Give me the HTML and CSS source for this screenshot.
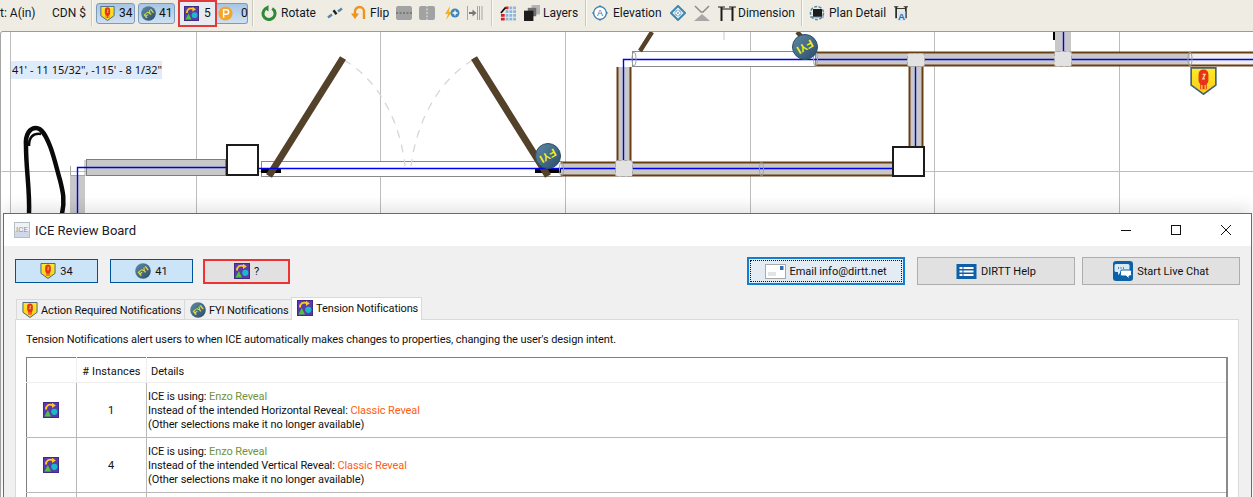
FILE: index.html
```html
<!DOCTYPE html>
<html lang="en">
<head>
<meta charset="utf-8">
<title>ICE Review Board</title>
<link rel="stylesheet" href="styles.css">
</head>
<body>
<svg class="defs" width="0" height="0" aria-hidden="true">
  <defs>
    <linearGradient id="pinfill" x1="0" y1="0" x2="1" y2="1">
      <stop offset="0" stop-color="#5f8aa8"/>
      <stop offset="1" stop-color="#2a4d68"/>
    </linearGradient>
    <linearGradient id="shieldfill" x1="0" y1="0" x2="0" y2="1">
      <stop offset="0" stop-color="#ffe92a"/>
      <stop offset="1" stop-color="#f8cf14"/>
    </linearGradient>
  </defs>
  <symbol id="shield" viewBox="0 0 16 17">
    <path d="M.5 .5h15v10.500L8 16.500.5 11z" fill="url(#shieldfill)" stroke="#44607c" stroke-width="1"/>
    <path d="M5 4.500c0-2 1.300-3 3-3s3 1 3 3v3.500c0 1-.5 1.800-1 2.300v3.200H6v-3.200c-.5-.5-1-1.300-1-2.300z" fill="#e5341a"/>
    <path d="M7 13.500V11M9 13.500V11" stroke="#ffe92a" stroke-width=".7"/>
    <path d="M7.500 4.500h1.400L7.600 7.200h1.300" fill="none" stroke="#ffd98a" stroke-width=".8"/>
  </symbol>
  <symbol id="coin" viewBox="0 0 16 16">
    <circle cx="8" cy="8" r="7.800" fill="url(#pinfill)"/>
  </symbol>
  <symbol id="tension" viewBox="0 0 16 16">
    <rect width="16" height="16" fill="#5a3ba8"/>
    <rect x=".5" y=".5" width="15" height="15" fill="none" stroke="#40298a"/>
    <path d="M3 7.500C3 3.500 6 1.800 9.500 3" fill="none" stroke="#ffc91f" stroke-width="1.900"/>
    <path d="M9 .8l3.800 2.700L9 6z" fill="#ffc91f"/>
    <path d="M1.500 14.500L4.800 8l3.200 6.500z" fill="#4ec43a"/>
    <circle cx="11.300" cy="9.800" r="3.100" fill="#19b9c9"/>
  </symbol>
  <symbol id="pcoin" viewBox="0 0 16 16">
    <circle cx="8" cy="8" r="7.500" fill="#f5a52a"/>
    <path d="M6 12.500V4h3a2.300 2.300 0 0 1 0 4.800H6" fill="none" stroke="#fff" stroke-width="1.500"/>
  </symbol>
  <symbol id="rotate" viewBox="0 0 16 16">
    <path d="M5.200 3.300a6 6 0 1 0 6 .2" fill="none" stroke="#2f8a38" stroke-width="3"/>
    <path d="M7.500 0v6.500L2.800 3.200z" fill="#2f8a38"/>
  </symbol>
  <symbol id="pivot" viewBox="0 0 16 16">
    <path d="M1 12.500l4-3M11 6.500l4-3" stroke="#5b86a8" stroke-width="2.500" fill="none"/>
    <path d="M5.500 6l2-1.500 3 4-2 1.500z" fill="#222"/>
  </symbol>
  <symbol id="flip" viewBox="0 0 16 16">
    <path d="M4 9V6.500a4.500 4.500 0 0 1 9 0V14" fill="none" stroke="#ef9418" stroke-width="2.400"/>
    <path d="M0 8.500h8L4 14z" fill="#ef9418"/>
  </symbol>
  <symbol id="splith" viewBox="0 0 16 16">
    <rect y="1" width="16" height="14" rx="2" fill="#a2a2a2"/>
    <path d="M0 8h16" stroke="#555" stroke-dasharray="2 1.500"/>
  </symbol>
  <symbol id="splitv" viewBox="0 0 16 16">
    <rect y="1" width="16" height="14" rx="2" fill="#a2a2a2"/>
    <path d="M8 0v16" stroke="#eee" stroke-dasharray="2 1.500"/>
  </symbol>
  <symbol id="bolt" viewBox="0 0 16 16">
    <path d="M6 1L1 9h3l-2 6 6-8H5z" fill="#f6b21c"/>
    <circle cx="11" cy="8" r="4.500" fill="#3f86b8"/>
    <path d="M8.500 8h5M11 5.500v5" stroke="#fff" stroke-width="1.300"/>
  </symbol>
  <symbol id="bars" viewBox="0 0 16 16">
    <path d="M.5 1v14M10.500 1v14M12.500 1v14M15 1v14" stroke="#a5a5a5" fill="none"/>
    <path d="M2 8h4" stroke="#777" stroke-width="2"/>
    <path d="M5.500 4.500L9.500 8l-4 3.500z" fill="#777"/>
  </symbol>
  <symbol id="table" viewBox="0 0 17 16">
    <path d="M10 1h3v3h-3zM14 1h3v3h-3zM6 5h3v3H6zM10 5h3v3h-3zM14 5h3v3h-3zM6 9h3v3H6zM10 9h3v3h-3zM14 9h3v3h-3zM6 13h3v3H6zM10 13h3v3h-3zM14 13h3v3h-3z" fill="#8db6dc"/>
    <path d="M6 1h3v3H6zM1 9h4v3H1zM1 13h4v3H1z" fill="#d3222a"/>
    <path d="M1 8l5-6" stroke="#111" stroke-width="1.800"/>
  </symbol>
  <symbol id="layers" viewBox="0 0 17 17">
    <rect x="8" width="9" height="10" fill="#b4b4b4"/>
    <rect x="4" y="3" width="9" height="9" fill="#6e6e6e"/>
    <rect y="6" width="10" height="11" fill="#1c1c1c"/>
  </symbol>
  <symbol id="elev" viewBox="0 0 16 16">
    <circle cx="8" cy="8" r="6.300" fill="#fff" stroke="#3f7fb0" stroke-width="1.200"/>
    <path d="M8 0l2 2H6zM8 16l2-2H6zM0 8l2-2v4zM16 8l-2-2v4z" fill="#3f7fb0"/>
  </symbol>
  <symbol id="diamond" viewBox="0 0 16 16">
    <path d="M8 1l7 7-7 7-7-7z" fill="#e8f1f8" stroke="#3f86b0" stroke-width="2"/>
    <circle cx="8" cy="8" r="3" fill="#fff" stroke="#7aa6c4" stroke-width=".8"/>
    <path d="M6 6l4 4M10 6l-4 4" stroke="#7aa6c4" stroke-width=".8"/>
  </symbol>
  <symbol id="hour" viewBox="0 0 16 16">
    <path d="M0 16l8-7 8 7z" fill="#a8a8a8"/>
    <path d="M1 1l6 6h2l6-6" fill="none" stroke="#8c8c8c" stroke-width="1.500"/>
  </symbol>
  <symbol id="dim" viewBox="0 0 18 18">
    <path d="M3.500 3v14M14.500 3v14" stroke="#1c1c1c" stroke-width="2"/>
    <path d="M0 3h7M11 3h7M3 5h12" stroke="#1c1c1c" stroke-width="1.200"/>
  </symbol>
  <symbol id="plan" viewBox="0 0 16 16">
    <circle cx="8" cy="8" r="6.500" fill="none" stroke="#5c86a6" stroke-width="1.500" stroke-dasharray="3 1.500"/>
    <rect x="4" y="4" width="9" height="8" fill="#1c1c1c"/>
    <path d="M1 12h14" stroke="#5c86a6"/>
  </symbol>
  <symbol id="dimA" viewBox="0 0 16 18">
    <path d="M2.500 2v13M13.500 2v13" stroke="#1c1c1c" stroke-width="1.800"/>
    <path d="M0 2h5M11 2h5M3 4h10" stroke="#1c1c1c"/>
    <rect x="4" y="7" width="9" height="11" fill="#d9e6f2"/>
  </symbol>
  <symbol id="envelope" viewBox="0 0 21 15">
    <rect x=".5" y=".5" width="20" height="14" fill="#fff" stroke="#a9a9a9"/>
    <rect x="15" y="2" width="3.500" height="4" fill="#2f6fb5"/>
    <path d="M3 9h8M3 11h8" stroke="#c8c8c8"/>
  </symbol>
  <symbol id="help" viewBox="0 0 20 15">
    <rect width="20" height="15" fill="#0f5fa8"/>
    <path d="M3 3h3v2H3zM7 3h10v2H7zM3 6.500h3v2H3zM7 6.500h10v2H7zM3 10h3v2H3zM7 10h10v2H7z" fill="#fff"/>
  </symbol>
  <symbol id="chat" viewBox="0 0 20 20">
    <rect width="20" height="20" rx="3" fill="#0b62a8"/>
    <path d="M3 3h12a1.500 1.500 0 0 1 1.500 1.500v5A1.500 1.500 0 0 1 15 11H8l-3 3v-3H3A1.500 1.500 0 0 1 1.500 9.500v-5A1.500 1.500 0 0 1 3 3z" fill="#dbe9f3"/>
    <path d="M9 9h8a1.500 1.500 0 0 1 1.500 1.500v3A1.500 1.500 0 0 1 17 15h-1v3l-3-3H9a1.500 1.500 0 0 1-1.500-1.500v-3A1.500 1.500 0 0 1 9 9z" fill="#fff" stroke="#0b62a8"/>
    <path d="M5 7h1M7.500 7h1M10 7h1" stroke="#2f6fa8" stroke-width="1.500"/>
  </symbol>
  <symbol id="ice" viewBox="0 0 16 16">
    <rect x=".5" y=".5" width="15" height="15" fill="#eef1f6" stroke="#b5bdc8"/>
    <rect x="1" y="9" width="14" height="6" fill="#cfd8e6"/>
  </symbol>
</svg>

<header class="toolbar">
  <span class="label w-unit">t: A(in)</span>
  <span class="label label-cdn">CDN $</span>
  <span class="sep sep-a"></span>
  <div class="chips">
    <span class="chip chip-shield"><svg class="ic ic-chip"><use href="#shield"/></svg>34</span>
    <span class="chip chip-fyi"><svg class="ic ic-chip" viewBox="0 0 16 16"><use href="#coin"/><text class="fyi-mark" x="8" y="10.500" transform="rotate(-38 8 8)">FYI</text></svg>41</span>
    <span class="chip chip-alert"><svg class="ic ic-chip"><use href="#tension"/></svg>5</span>
    <span class="chip chip-p"><svg class="ic ic-chip"><use href="#pcoin"/></svg>0</span>
  </div>
  <span class="sep sep-b"></span>
  <svg class="ic"><use href="#rotate"/></svg><span class="label lead w-rotate">Rotate</span>
  <svg class="ic m10"><use href="#pivot"/></svg>
  <svg class="ic m8"><use href="#flip"/></svg><span class="label lead3 w-flip">Flip</span>
  <svg class="ic m10"><use href="#splith"/></svg>
  <svg class="ic m7"><use href="#splitv"/></svg>
  <svg class="ic m9"><use href="#bolt"/></svg>
  <svg class="ic m7"><use href="#bars"/></svg>
  <span class="sep sep-c"></span>
  <svg class="ic"><use href="#table"/></svg>
  <svg class="ic m8"><use href="#layers"/></svg><span class="label lead3 w-layers">Layers</span>
  <span class="sep sep-d"></span>
  <svg class="ic" viewBox="0 0 16 16"><use href="#elev"/><text class="elev-mark" x="8" y="11">A</text></svg><span class="label lead5 w-elev">Elevation</span>
  <svg class="ic m8"><use href="#diamond"/></svg>
  <svg class="ic m8"><use href="#hour"/></svg>
  <svg class="ic ic-wide m8"><use href="#dim"/></svg><span class="label lead2 w-dim">Dimension</span>
  <span class="sep sep-e"></span>
  <svg class="ic"><use href="#plan"/></svg><span class="label lead w-plan">Plan Detail</span>
  <svg class="ic m7" viewBox="0 0 16 18"><use href="#dimA"/><text class="dima-mark" x="8.500" y="17">A</text></svg>
</header>

<main class="canvas">
  <svg class="plan" viewBox="0 32 1253 465" aria-hidden="true">
    <g class="grid">
      <path d="M10.500 32V497M196.500 32V497M380.500 32V497M565.500 32V497M750.500 32V497M934.500 32V497M1119.500 32V497M1.500 171.500H1253"/>
    </g>
    <!-- left freehand shape -->
    <path class="scribble" d="M29 214C30 190 26 170 26 146 25 134 30 128 36 128 42 128 46 136 50 146 54 156 57 170 60 180 63 192 65 200 62 214"/>
    <path class="scribble-in" d="M29 146C29 137 33 133 41 134"/>
    <!-- plain grey wall, left -->
    <rect class="core edge" x="86.500" y="159.500" width="139" height="16"/>
    <rect class="core" x="70" y="175" width="15" height="40"/>
    <path class="ghost" d="M70.500 166V175.500H85M85 160V176"/>
    <!-- door opening -->
    <rect class="open" x="261.500" y="161.500" width="300" height="15"/>
    <path class="black" d="M261 170.500H281M535 170.500H561"/>
    <path class="arc" d="M344 60C378 80 400 120 405 166M473 60C439 80 417 120 411 166"/>
    <path class="door" d="M343 58L269 176M474 58L548 176"/>
    <!-- brown walls -->
    <rect class="core" x="561" y="162" width="331" height="14"/>
    <rect class="core" x="617" y="67" width="14" height="94"/>
    <rect class="core" x="816" y="52" width="374" height="14"/>
    <rect class="core" x="909" y="66" width="14" height="80"/>
    <rect class="pale" x="1190" y="52" width="63" height="14"/>
    <path class="brown" d="M561 162.500H892M561 175.500H892M816 52.500H1253M816 65.500H1253M617.500 67V161M630.500 67V161M909.500 66V146M922.500 66V146"/>
    <rect class="core" x="1055" y="32" width="16" height="21"/>
    <rect class="black-tick" x="1053" y="32" width="2" height="8"/>
    <rect class="open" x="632.500" y="51.500" width="183" height="15"/>
    <path class="blue" d="M77.500 214V167.500H226M258 168.500H892M623.500 160V59.500H1253M915.500 66V146M1063.500 32V52"/>
    <g class="seam">
      <ellipse cx="561.500" cy="169" rx="2" ry="7"/>
      <ellipse cx="761.500" cy="169" rx="2" ry="7"/>
      <ellipse cx="815.500" cy="59" rx="2" ry="7"/>
      <ellipse cx="1190" cy="59" rx="2" ry="7"/>
      <ellipse cx="634" cy="59" rx="2" ry="7"/>
    </g>
    <g class="joint">
      <rect x="615.500" y="160.500" width="17" height="16" rx="2"/>
      <rect x="907.500" y="53.500" width="17" height="13" rx="2"/>
      <rect x="1054.500" y="51.500" width="17" height="15" rx="2"/>
    </g>
    <rect class="column" x="227" y="145" width="31" height="30"/>
    <rect class="column" x="893" y="147" width="31" height="29"/>
    <path class="door thin" d="M652 32L640 51M797 32L803 38"/>
    <path class="arc" d="M724 32V42"/>
    <!-- FYI pins -->
    <g class="pin" transform="translate(548 156)"><circle r="12.500"/><text transform="rotate(150)" y="4">FYI</text></g>
    <g class="pin" transform="translate(805 47)"><circle r="12.500"/><text transform="rotate(150)" y="4">FYI</text></g>
    <use href="#shield" x="1190" y="67" width="27" height="28"/>
  </svg>
  <div class="readout">41' - 11 15/32", -115' - 8 1/32"</div>
</main>

<section class="dialog">
  <div class="titlebar">
    <span class="ice-logo">ICE</span>
    <h1 class="title">ICE Review Board</h1>
    <span class="winbtn"><span class="win-min"></span></span>
    <span class="winbtn"><span class="win-max"></span></span>
    <span class="winbtn">
      <svg class="win-close" viewBox="0 0 10 10"><path d="M0 0l10 10M10 0L0 10"/></svg>
    </span>
  </div>
  <div class="body">
    <div class="actions">
      <button class="btn btn-blue"><svg class="ic-btn"><use href="#shield"/></svg>34</button>
      <button class="btn btn-blue btn-second"><svg class="ic-btn" viewBox="0 0 16 16"><use href="#coin"/><text class="fyi-mark" x="8" y="10.500" transform="rotate(-38 8 8)">FYI</text></svg>41</button>
      <button class="btn btn-red"><svg class="ic-btn"><use href="#tension"/></svg>?</button>
      <button class="btn btn-wide btn-focus"><span class="focus-ring"><svg class="ic-env"><use href="#envelope"/></svg>Email info@dirtt.net</span></button>
      <button class="btn btn-wide btn-help"><svg class="ic-env"><use href="#help"/></svg>DIRTT Help</button>
      <button class="btn btn-wide btn-chat"><svg class="ic-chat"><use href="#chat"/></svg>Start Live Chat</button>
    </div>
    <div class="tabs">
      <span class="tab tab-action"><svg class="ic-tab"><use href="#shield"/></svg>Action Required Notifications</span>
      <span class="tab tab-fyi"><svg class="ic-tab" viewBox="0 0 16 16"><use href="#coin"/><text class="fyi-mark" x="8" y="10.500" transform="rotate(-38 8 8)">FYI</text></svg>FYI Notifications</span>
      <span class="tab tab-active"><svg class="ic-tab"><use href="#tension"/></svg>Tension Notifications</span>
    </div>
    <div class="panel">
      <p class="intro">Tension Notifications alert users to when ICE automatically makes changes to properties, changing the user's design intent.</p>
      <table class="grid-table">
        <thead>
          <tr><th class="c-icon"></th><th class="c-num"># Instances</th><th class="c-detail">Details</th></tr>
        </thead>
        <tbody>
          <tr>
            <td class="c-icon"><svg class="ic-row"><use href="#tension"/></svg></td>
            <td class="c-num">1</td>
            <td class="c-detail">ICE is using: <span class="good">Enzo Reveal</span><br>Instead of the intended Horizontal Reveal: <span class="bad">Classic Reveal</span><br>(Other selections make it no longer available)</td>
          </tr>
          <tr>
            <td class="c-icon"><svg class="ic-row"><use href="#tension"/></svg></td>
            <td class="c-num">4</td>
            <td class="c-detail">ICE is using: <span class="good">Enzo Reveal</span><br>Instead of the intended Vertical Reveal: <span class="bad">Classic Reveal</span><br>(Other selections make it no longer available)</td>
          </tr>
          <tr class="row-empty"><td class="c-icon"></td><td class="c-num"></td><td class="c-detail"></td></tr>
        </tbody>
      </table>
    </div>
  </div>
</section>
</body>
</html>
```
FILE: styles.css
```css
* { box-sizing: border-box; }
html, body { margin: 0; height: 497px; overflow: hidden; }
body { position: relative; width: 1253px; background: #fff; font-family: Roboto, "Noto Sans", sans-serif; color: #111; }
.defs { position: absolute; }
.fyi-mark { font-family: "Liberation Sans", sans-serif; font-size: 7px; font-weight: 700; fill: #f3e92a; text-anchor: middle; }
.elev-mark { font-family: "Liberation Sans", sans-serif; font-size: 9px; fill: #2f6fa8; text-anchor: middle; }
.dima-mark { font-family: "Liberation Sans", sans-serif; font-size: 11px; font-weight: 700; fill: #2f6fa8; text-anchor: middle; }

/* toolbar */
.toolbar { display: flex; align-items: center; height: 31px; padding-bottom: 5px; background: #efede3; white-space: nowrap; overflow: hidden; font-size: 12px; }
.label { flex: none; line-height: 16px; color: #101828; }
.w-unit { width: 39px; }
.label-cdn { width: 35px; margin-left: 13px; }
.lead { margin-left: 4px; }
.lead2 { margin-left: 2px; }
.lead3 { margin-left: 3px; }
.lead5 { margin-left: 5px; }
.w-rotate { width: 36px; }
.w-flip { width: 16px; }
.w-layers { width: 35px; }
.w-elev { width: 49px; }
.w-dim { width: 54px; }
.w-plan { width: 57px; }
.sep { flex: none; width: 1px; height: 26px; background: #c9c8bd; box-shadow: 1px 0 0 #fbfaf5; }
.sep-a { margin: 0 4px 0 4px; }
.sep-b { margin: 0 8px 0 4px; }
.sep-c { margin: 0 8px 0 8px; }
.sep-d { margin: 0 6px 0 7px; }
.sep-e { margin: 0 7px 0 9px; }
.ic { flex: none; width: 16px; height: 16px; }
.ic-wide { width: 18px; height: 18px; }
.m7 { margin-left: 7px; }
.m8 { margin-left: 8px; }
.m9 { margin-left: 9px; }
.m10 { margin-left: 10px; }
.chips { flex: none; display: flex; align-items: center; height: 26px; width: 152px; }
.chip { flex: none; display: flex; align-items: center; height: 21px; gap: 4px; padding-left: 3px; background: linear-gradient(#a6c6e6, #cfe0f2); border: 1px solid #7d9ab8; border-radius: 3px; }
.chip-shield { width: 39px; }
.chip-fyi { width: 37px; margin-left: 3px; gap: 3px; padding-left: 2px; }
.chip-alert { width: 39px; height: 27px; margin-left: 3px; padding-left: 4px; gap: 5px; background: #e8ecf1; border: 2px solid #e23a3a; border-radius: 0; }
.chip-p { width: 31px; padding-left: 1px; gap: 8px; border-left: 0; border-radius: 0 3px 3px 0; }
.ic-chip { width: 15px; height: 15px; flex: none; }

/* canvas */
.canvas { position: absolute; left: 0; top: 31px; width: 1253px; height: 466px; background: #fff; border-top: 1px solid #9b9b9b; border-left: 1px solid #a5a5a5; border-top-left-radius: 3px; overflow: hidden; }
.plan { position: absolute; left: -1px; top: 0; width: 1253px; height: 465px; }
.grid path { fill: none; stroke: #bdbdbd; stroke-width: 1; }
.scribble { fill: none; stroke: #0a0a0a; stroke-width: 4.500; }
.scribble-in { fill: none; stroke: #0a0a0a; stroke-width: 2.500; }
.core { fill: #c8c8c8; }
.pale { fill: #efefef; }
.edge { stroke: #7e7e7e; stroke-width: 1; }
.ghost { fill: none; stroke: #a8a8a8; stroke-width: 1; }
.open { fill: #fff; stroke: #888; stroke-width: 1; }
.black { fill: none; stroke: #000; stroke-width: 5; }
.black-tick { fill: #000; }
.arc { fill: none; stroke: #d6d6d6; stroke-width: 1.300; stroke-dasharray: 8 7; }
.door { fill: none; stroke: #54412a; stroke-width: 7; }
.door.thin { stroke-width: 4.500; }
.brown { fill: none; stroke: #6a3f10; stroke-width: 2; }
.seam ellipse { fill: none; stroke: #a0a0a0; stroke-width: 1; }
.joint rect { fill: #e2e2e2; stroke: #a8a8a8; stroke-width: 1; stroke-dasharray: 4 2; }
.blue { fill: none; stroke: #0000f0; stroke-width: 1.400; }
.column { fill: #fff; stroke: #1c1c1c; stroke-width: 2; }
.pin circle { fill: url(#pinfill); stroke: #2b4f6c; stroke-width: 1; }
.pin text { font-family: "Liberation Sans", sans-serif; font-size: 11px; font-weight: 700; fill: #f5ee20; text-anchor: middle; }
.readout { position: absolute; left: 10px; top: 29px; width: 151px; height: 18px; padding-left: 1px; background: #ddebfb; font-family: "Noto Sans", sans-serif; font-size: 11px; line-height: 18px; color: #111; white-space: nowrap; }

/* dialog */
.dialog { position: absolute; left: 3px; top: 213px; width: 1249px; height: 284px; background: #f0f0f0; border: 1px solid #1780d0; border-bottom: 0; box-shadow: 0 -6px 14px rgba(0,0,0,.1); overflow: hidden; }
.titlebar { display: flex; align-items: center; height: 32px; padding-left: 10px; background: #fff; }
.ice-logo { flex: none; width: 16px; height: 16px; background: linear-gradient(#eef1f6 55%, #cfd8e6 55%); border: 1px solid #b5bdc8; font-size: 8px; line-height: 14px; text-align: center; color: #8a93a3; }
.title { margin: 0 0 0 5px; flex: 1; font-size: 13px; font-weight: 400; color: #1a1a2a; }
.winbtn { width: 50px; display: flex; justify-content: center; align-items: center; height: 20px; }
.win-min { width: 10px; height: 1px; background: #111; }
.win-max { width: 10px; height: 10px; border: 1px solid #111; }
.win-close { width: 10px; height: 10px; }
.win-close path { stroke: #111; stroke-width: 1; fill: none; }

.body { padding: 0 0 0 11px; }
.actions { display: flex; align-items: center; height: 53px; padding-bottom: 3px; }
.btn { flex: none; display: flex; align-items: center; justify-content: center; gap: 4px; height: 24px; padding: 0; width: 83px; background: #cce4f7; border: 1px solid #005499; font: inherit; font-size: 11px; color: #111; }
.btn-second { margin-left: 12px; }
.btn-red { margin-left: 10px; width: 87px; height: 25px; background: #e1e1e1; border: 2px solid #ee3333; }
.btn-wide { width: 158px; height: 28px; background: #e1e1e1; border: 1px solid #adadad; }
.btn-focus { margin-left: 457px; background: #e3ebf3; border: 2px solid #0f7fd6; padding: 1px; }
.focus-ring { flex: 1; align-self: stretch; display: flex; align-items: center; justify-content: center; gap: 3px; border: 1px dotted #111; }
.btn-help { margin-left: 12px; }
.btn-chat { margin-left: 7px; }
.ic-btn { width: 16px; height: 16px; flex: none; }
.ic-env { width: 21px; height: 15px; flex: none; }
.ic-chat { width: 20px; height: 20px; flex: none; }

.tabs { display: flex; align-items: flex-end; height: 21px; margin-top: -1px; padding-left: 1px; font-size: 11px; letter-spacing: -.1px; }
.tab { flex: none; display: flex; align-items: center; gap: 3px; height: 20px; padding-top: 1px; padding-left: 5px; background: #f0f0f0; border: 1px solid #d9d9d9; border-bottom: 0; white-space: nowrap; }
.tab-action { width: 169px; }
.tab-fyi { width: 108px; margin-left: -1px; }
.tab-active { width: 131px; height: 23px; margin-left: -1px; padding-top: 0; padding-bottom: 2px; background: #fff; position: relative; top: 1px; }
.ic-tab { width: 16px; height: 16px; flex: none; }
.panel { width: 1224px; height: 180px; padding: 0 10px; background: #fff; border: 1px solid #d9d9d9; font-size: 11px; letter-spacing: -.09px; }
.intro { margin: 0; height: 37px; line-height: 39px; white-space: nowrap; }
.grid-table { width: 1202px; border-collapse: collapse; table-layout: fixed; border-top: 1px solid #7f7f7f; border-left: 1px solid #7f7f7f; border-right: 2px solid #8a8a8a; }
.grid-table th { height: 25px; padding: 2px 0 0; font-weight: 400; border-bottom: 1px solid #eee; }
.grid-table th.c-icon, .grid-table th.c-num { border-right: 1px solid #eee; }
.grid-table th.c-num { letter-spacing: .1px; }
.grid-table td { height: 55px; padding: 0; border-bottom: 1px solid #b8b8b8; border-right: 1px solid #b8b8b8; }
.grid-table td.c-num { padding-right: 1px; }
.grid-table td.c-detail { border-right: 0; padding: 2px 0 0 1px; line-height: 14px; white-space: nowrap; }
.grid-table th.c-detail { text-align: left; padding-left: 4px; }
.c-icon { width: 50px; text-align: center; }
.c-num { width: 70px; text-align: center; }
.ic-row { display: block; width: 16px; height: 16px; margin: 0 auto; position: relative; left: -1px; }
.good { color: #6f9440; }
.bad { color: #ff5c14; }
```
